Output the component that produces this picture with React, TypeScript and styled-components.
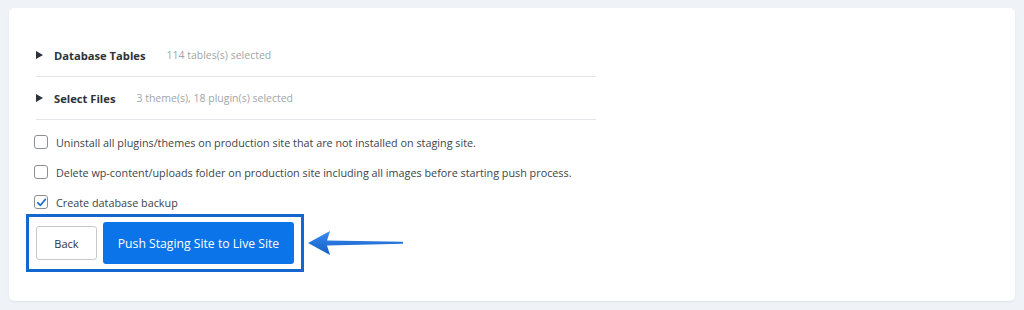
import React from 'react'
import styled, { createGlobalStyle } from 'styled-components'

const GlobalStyle = createGlobalStyle`
  html, body {
    margin: 0;
    padding: 0;
    background: #eff3f8;
    font-family: "Open Sans", "Noto Sans", sans-serif;
  }
  #root {
    padding: 8px 9px 9px 9px;
  }
`

interface Section {
  title: string
  hint: string
}

const sections: Section[] = [
  { title: 'Database Tables', hint: '114 tables(s) selected' },
  { title: 'Select Files', hint: '3 theme(s), 18 plugin(s) selected' },
]

const options = [
  { label: 'Uninstall all plugins/themes on production site that are not installed on staging site.', checked: false },
  { label: 'Delete wp-content/uploads folder on production site including all images before starting push process.', checked: false },
  { label: 'Create database backup', checked: true },
]

const App: React.FC = () => {
  return (
    <>
      <GlobalStyle />
      <Card>
        <Sections>
          {sections.map(section => (
            <SectionRow key={section.title}>
              <Caret />
              <SectionTitle>{section.title}</SectionTitle>
              <SectionHint>{section.hint}</SectionHint>
            </SectionRow>
          ))}
        </Sections>
        <Options>
          {options.map(option => (
            <OptionRow key={option.label}>
              <CheckBox checked={option.checked}>
                {option.checked && (
                  <svg width="11" height="11" viewBox="0 0 12 12">
                    <path d="M2 6.3 L4.8 9 L10.2 2.6" fill="none" stroke="#1d6fd0" strokeWidth="1.9" strokeLinecap="round" strokeLinejoin="round" />
                  </svg>
                )}
              </CheckBox>
              <OptionLabel>{option.label}</OptionLabel>
            </OptionRow>
          ))}
        </Options>
        <ActionsLine>
          <Highlight>
            <BackButton>Back</BackButton>
            <PushButton>Push Staging Site to Live Site</PushButton>
          </Highlight>
          <Arrow viewBox="0 0 100 30" width="100" height="30">
            <defs>
              <linearGradient id="arrowFill" x1="0" y1="0" x2="0" y2="1">
                <stop offset="0" stopColor="#3a8af0" />
                <stop offset="1" stopColor="#135fc4" />
              </linearGradient>
            </defs>
            <path d="M1 15 L23 3 L20 12.6 L96 13.8 L96 15.8 L20 17.6 L23 27 Z" fill="url(#arrowFill)" />
          </Arrow>
        </ActionsLine>
      </Card>
    </>
  )
}

export default App

const Card = styled.div`
  background: #ffffff;
  border-radius: 5px;
  box-shadow: 0 1px 2px rgba(30, 50, 90, 0.08);
  padding: 26px 26px 29px 17px;
  height: 293px;
  box-sizing: border-box;
`

const Sections = styled.div`
  width: 560px;
  margin-left: 10px;
`

const SectionRow = styled.div`
  display: flex;
  align-items: center;
  height: 42px;
  border-bottom: 1px solid #e3e5e8;
`

const Caret = styled.span`
  width: 0;
  height: 0;
  border-top: 4.5px solid transparent;
  border-bottom: 4.5px solid transparent;
  border-left: 7px solid #2c3338;
  margin-right: 11px;
`

const SectionTitle = styled.span`
  font-size: 11.2px;
  font-weight: 700;
  color: #2c3338;
  margin-right: 21px;
`

const SectionHint = styled.span`
  font-size: 10.5px;
  color: #a2a5a8;
`

const Options = styled.div`
  display: flex;
  flex-direction: column;
  gap: 10px;
  margin: 12px 0 0 8px;
`

const OptionRow = styled.label`
  display: flex;
  align-items: center;
  height: 20px;
`

const CheckBox = styled.span<{ checked: boolean }>`
  width: 12px;
  height: 12px;
  border: 1px solid #8c8f94;
  border-radius: 3px;
  display: flex;
  align-items: center;
  justify-content: center;
  margin-right: 8px;
  background: #fff;
`

const OptionLabel = styled.span`
  font-size: 10.8px;
  color: #3c434a;
`

const ActionsLine = styled.div`
  display: flex;
  align-items: center;
  margin-top: 2px;
`

const Highlight = styled.div`
  display: inline-flex;
  align-items: center;
  gap: 6px;
  border: 3px solid #1467cf;
  padding: 5px 7px;
`

const BackButton = styled.button`
  height: 34px;
  width: 61px;
  background: #ffffff;
  border: 1px solid #c7c9cd;
  border-radius: 3px;
  font-family: "Open Sans", "Noto Sans", sans-serif;
  font-size: 11px;
  color: #2c3338;
`

const PushButton = styled.button`
  height: 42px;
  width: 191px;
  background: #0a74e8;
  border: none;
  border-radius: 3px;
  font-family: "Open Sans", "Noto Sans", sans-serif;
  font-size: 12.2px;
  color: #ffffff;
`

const Arrow = styled.svg`
  margin-left: 3px;
  display: block;
`
